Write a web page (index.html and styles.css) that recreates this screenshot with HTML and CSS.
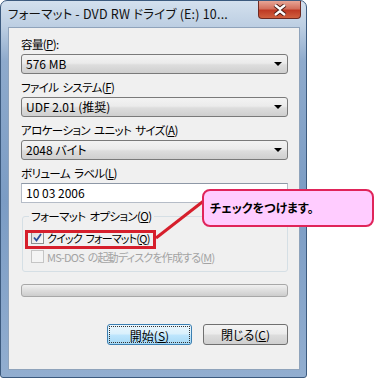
FILE: index.html
```html
<!DOCTYPE html>
<html lang="ja">
<head>
    <meta charset="UTF-8">
    <meta name="viewport" content="width=device-width, initial-scale=1.0">
    <link rel="stylesheet" href="styles.css">
</head>
<body>
    <div class="window">
        <div class="titlebar">
            <span class="title">フォーマット - DVD RW ドライブ (E:) 10...</span>
            <span class="close-btn">
                <svg width="16" height="12" viewBox="0 0 16 12">
                    <path d="M3 1 L8 5 L13 1 M3 11 L8 7 L13 11" fill="none" stroke="#4a1a14" stroke-width="4.2"/>
                    <path d="M3 1 L8 5 L13 1 M3 11 L8 7 L13 11" fill="none" stroke="#fff" stroke-width="2.4"/>
                </svg>
            </span>
        </div>
        <div class="client">
            <div class="field">
                <div class="label">容量(<u>P</u>):</div>
                <div class="combo">576 MB<span class="arrow"></span></div>
            </div>
            <div class="field">
                <div class="label">ファイル システム(<u>F</u>)</div>
                <div class="combo">UDF 2.01 (推奨)<span class="arrow"></span></div>
            </div>
            <div class="field">
                <div class="label">アロケーション ユニット サイズ(<u>A</u>)</div>
                <div class="combo">2048 バイト<span class="arrow"></span></div>
            </div>
            <div class="field">
                <div class="label">ボリューム ラベル(<u>L</u>)</div>
                <div class="textbox">10 03 2006</div>
            </div>

            <fieldset class="group">
                <legend>フォーマット オプション(<u>O</u>)</legend>
                <div class="check-row">
                    <span class="checkbox">
                        <svg width="9" height="9" viewBox="0 0 9 9">
                            <path d="M1 4.5 L3.5 7.5 L8 1" fill="none" stroke="#2b4f9a" stroke-width="1.8"/>
                        </svg>
                    </span>
                    <span>クイック フォーマット(<u>Q</u>)</span>
                </div>
                <div class="check-row disabled">
                    <span class="checkbox"></span>
                    <span>MS-DOS の起動ディスクを作成する(<u>M</u>)</span>
                </div>
            </fieldset>

            <div class="progress"></div>

            <div class="buttons">
                <span class="btn default"><span class="focus">開始(<u>S</u>)</span></span>
                <span class="btn">閉じる(<u>C</u>)</span>
            </div>
        </div>
    </div>

    <div class="highlight"></div>
    <svg class="pointer" width="70" height="60" viewBox="0 0 70 60">
        <line x1="2" y1="48" x2="56" y2="6" stroke="#d61f2c" stroke-width="3"/>
    </svg>
    <div class="callout">チェックをつけます。</div>
</body>
</html>
```

FILE: styles.css
```css
* {
    margin: 0;
    padding: 0;
    box-sizing: border-box;
}

body {
    background-color: #fff;
    font-family: "Noto Sans CJK JP", sans-serif;
    font-size: 12px;
    font-feature-settings: "palt";
    color: #000;
    position: relative;
    width: 375px;
    height: 379px;
    overflow: hidden;
}

.window {
    width: 307px;
    height: 378px;
    padding: 0 6px 7px 7px;
    border: 1px solid #3c5a7e;
    border-radius: 7px 7px 3px 3px;
    background: linear-gradient(to bottom, #d3e0ee 0, #bccee2 26px, #8eaacc 60px, #7b9cc4 200px, #92aed0 378px);
    display: flex;
    flex-direction: column;
}

.titlebar {
    height: 26px;
    display: flex;
    align-items: flex-start;
    justify-content: space-between;
    margin-right: -1px;
}

.title {
    padding-top: 3px;
    font-size: 12.5px;
    color: #111;
    white-space: nowrap;
    letter-spacing: 0.2px;
}

.close-btn {
    width: 43px;
    height: 18px;
    display: flex;
    align-items: center;
    justify-content: center;
    border: 1px solid #6e2a22;
    border-top: none;
    border-radius: 0 0 4px 4px;
    background: linear-gradient(to bottom, #e8a596 0, #d3705d 45%, #bf3a24 55%, #d0603f 100%);
}

.client {
    flex: 1;
    background-color: #f0f0f0;
    border: 1px solid #8fa3bb;
    padding: 8px 11px 0 12px;
}

.field {
    margin-bottom: 5px;
}

.label {
    height: 16px;
    line-height: 16px;
    margin-bottom: 2px;
    white-space: nowrap;
    font-size: 11.5px;
    letter-spacing: -0.6px;
    word-spacing: 2px;
}

.combo {
    position: relative;
    height: 20px;
    line-height: 18px;
    padding-left: 4px;
    border: 1px solid #7a7a7a;
    border-radius: 3px;
    background: linear-gradient(to bottom, #f3f3f3 0, #ebebeb 45%, #dddddd 55%, #cfcfcf 100%);
}

.arrow {
    position: absolute;
    right: 5px;
    top: 7px;
    width: 0;
    height: 0;
    border-left: 4px solid transparent;
    border-right: 4px solid transparent;
    border-top: 4px solid #000;
}

.textbox {
    height: 20px;
    line-height: 18px;
    padding-left: 4px;
    background-color: #fff;
    border: 1px solid #b5bcc7;
    border-top-color: #8e98a6;
}

.group {
    margin-top: 5px;
    margin-left: 1px;
    border: 1px solid #d5dfe5;
    border-radius: 3px;
    padding: 4px 0 5px 8px;
}

.group legend {
    margin-left: -2px;
    padding: 0 2px;
    line-height: 16px;
    font-size: 11.5px;
    letter-spacing: -0.6px;
    word-spacing: 2px;
}

.check-row {
    height: 19px;
    display: flex;
    align-items: center;
    gap: 3px;
    white-space: nowrap;
    font-size: 11px;
    letter-spacing: -0.8px;
    word-spacing: 2px;
}

.check-row.disabled {
    color: #a3a3a3;
}

.checkbox {
    width: 13px;
    height: 13px;
    border: 1px solid #8f8f8f;
    background: linear-gradient(135deg, #dcdcdc, #fbfbfb);
    display: flex;
    align-items: center;
    justify-content: center;
}

.check-row.disabled .checkbox {
    border-color: #c5c5c5;
    background: #f4f4f4;
}

.progress {
    height: 13px;
    margin-top: 12px;
    border: 1px solid #a8a8a8;
    border-radius: 3px;
    background: linear-gradient(to bottom, #f1f1f1 0, #dedede 50%, #cdcdcd 100%);
}

.buttons {
    margin-top: 27px;
    display: flex;
    justify-content: flex-end;
    gap: 11px;
}

.btn {
    width: 85px;
    height: 21px;
    line-height: 19px;
    text-align: center;
    border: 1px solid #707070;
    border-radius: 3px;
    background: linear-gradient(to bottom, #f4f4f4 0, #ebebeb 48%, #dddddd 52%, #cfcfcf 100%);
}

.btn.default {
    border-color: #3c7fb1;
    background: linear-gradient(to bottom, #eaf6fd 0, #d9f0fc 48%, #bee6fd 52%, #a7d9f5 100%);
    padding: 1px;
}

.btn.default .focus {
    display: block;
    height: 17px;
    line-height: 17px;
    border: 1px dotted #333;
}

.highlight {
    position: absolute;
    left: 25px;
    top: 230px;
    width: 131px;
    height: 19px;
    border: 3px solid #d61f2c;
}

.pointer {
    position: absolute;
    left: 154px;
    top: 190px;
}

.callout {
    position: absolute;
    left: 202px;
    top: 189px;
    width: 172px;
    height: 38px;
    line-height: 34px;
    padding-left: 6px;
    background-color: #ffccff;
    border: 2px solid #e0245a;
    border-radius: 8px;
    font-weight: bold;
    font-size: 12px;
}
```
